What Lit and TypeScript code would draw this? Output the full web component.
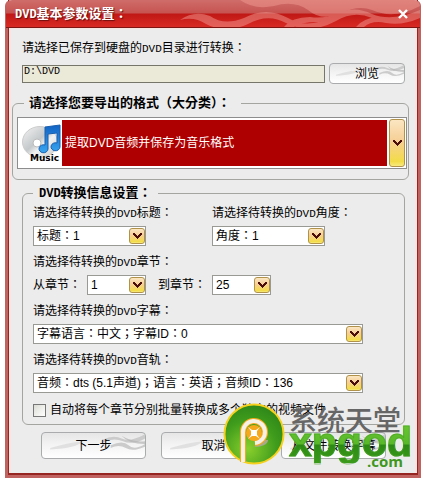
import { LitElement, html, svg, css } from "lit";
import { customElement } from "lit/decorators.js";

const chevron = svg`<path d="M1 1h2v1h1v1h1v1h1v-1h1v-1h1v-1h2v2h-1v1h-1v1h-1v1h-1v1h-1v-1h-1v-1h-1v-1h-1v-1h-1z" fill="#4a0d0a"/>`;
const smoke = html`<svg class="smoke" viewBox="0 0 75 20" preserveAspectRatio="xMaxYMin slice" aria-hidden="true">
  <path d="M44 5q8-4 14-1t17-3v3q-9 5-16 2t-15 1zM50 9q9-4 13 0t12-1v2q-9 4-14 1t-11 0z" fill="#cbcbcb"/>
  <path d="M58 2q8 5 17 4v2q-12 0-17-6z" fill="#b4b4b4" opacity=".7"/>
  <path d="M6 11q12-4 24-5q-5 5-24 6z" fill="#e0e0e0"/>
</svg>`;

@customElement("app-root")
export class AppRoot extends LitElement {
  static styles = css`
    :host {
      display: block;
      background: #fff;
      padding: 0 4px 2px 5px;
      font: 12px/16px "Liberation Sans", "Noto Sans CJK TC", sans-serif;
      color: #000;
    }
    * { box-sizing: border-box; }
    .window {
      position: relative;
      border: solid #c0625f;
      border-width: 0 3px 3px;
      border-radius: 6px 6px 0 0;
      background: #ececec;
    }
    .inner { border: solid #962420; border-width: 0 1px 2px; }
    .title {
      position: relative;
      display: flex;
      align-items: center;
      justify-content: space-between;
      height: 28px;
      margin: 0 -3px;
      padding: 0 9px 0 9px;
      border-radius: 6px 6px 0 0;
      border-bottom: 1px solid #7e1512;
      background: linear-gradient(#cf6d6a 0, #c65350 13px, #c01815 14px, #d92a24 27px);
      overflow: hidden;
    }
    .flames { position: absolute; right: 0; top: 0; width: 240px; height: 27px; }
    h1 { position: relative; margin: 0; font-size: 13px; line-height: 16px; color: #fff; text-shadow: 1px 1px 1px #6c100e; }
    .half { font-family: "Liberation Mono", monospace; font-size: 11px; line-height: 0; }
    h1 .half, legend .half { font-size: 12px; }
    .close { position: relative; width: 16px; height: 16px; padding: 2px; border: 0; background: none; }
    .close svg { display: block; }
    .body { border: solid #f8e4e0; border-width: 1px 2px 0; padding: 11px 6px 14px 1px; }
    .path { padding: 0 4px 0 10px; }
    .path label { display: block; margin-bottom: 7px; }
    .row { display: flex; align-items: center; }
    .path input {
      flex: 1;
      min-width: 0;
      height: 18px;
      margin-right: 4px;
      padding: 0 0 4px 1px;
      border: 1px solid #77766a;
      background: #ebe9d8;
      font: 10px/12px "Liberation Mono", monospace;
    }
    button { font: inherit; color: inherit; }
    .btn {
      position: relative;
      width: 105px;
      height: 27px;
      padding: 0;
      border: 1px solid #a9abad;
      border-radius: 4px;
      background: linear-gradient(#e6e6e6, #f3f3f3 45%, #fff);
      overflow: hidden;
    }
    .btn.small { width: 76px; height: 21px; }
    .btn span { position: relative; }
    .smoke { position: absolute; inset: 0; width: 100%; height: 100%; }
    fieldset { min-width: 0; margin: 0; border: 1px solid #a4a4a0; border-radius: 6px; }
    legend { padding: 0 6px 0 5px; font-size: 13px; line-height: 16px; font-weight: bold; }
    .format { margin: 11px 0 0 0; padding: 6px 1px 10px 4px; }
    .format legend { margin-left: 7px; padding-right: 10px; }
    .big { position: relative; display: flex; height: 52px; padding: 2px 19px 2px 4px; border: 1px solid #8d8d8d; background: #fff; }
    .disc { flex: none; width: 40px; height: 46px; }
    .disc text { font: bold 9px "DejaVu Sans", sans-serif; }
    select {
      appearance: none;
      display: block;
      margin: 0;
      padding: 0 20px 0 3px;
      border: 1px solid #9a9a94;
      border-radius: 0;
      width: 100%;
      height: 20px;
      background: #fff;
      color: #000;
      font: inherit;
    }
    .big select { flex: 1; min-width: 0; height: 46px; border: 0; background: #ae0000; color: #fff; }
    .combo { position: relative; display: block; }
    .arrow {
      position: absolute;
      right: 1px;
      top: 2px;
      bottom: 2px;
      width: 16px;
      display: grid;
      place-items: center;
      border: 1px solid #b0924a;
      border-radius: 3px;
      background: linear-gradient(#fbe6c2, #f6cf96 45%, #f3dc48 90%, #f8ea80);
      pointer-events: none;
    }
    .big .arrow { top: 1px; bottom: 1px; }
    .info { margin: 5px 4px 0 10px; padding: 0 10px 6px; }
    .info legend { padding-left: 6px; }
    .pair { display: grid; grid-template-columns: 113px 113px; column-gap: 66px; }
    .name { display: block; white-space: nowrap; margin: 8px 0 5px; }
    .first { margin-top: 4px; }
    .chapters { display: flex; align-items: center; }
    .chapters label { width: 54px; white-space: nowrap; }
    .chapters .combo { width: 59px; }
    .chapters .combo + label { margin-left: 12px; }
    .wide { width: 330px; max-width: 100%; }
    .check { display: flex; align-items: center; margin-top: 9px; white-space: nowrap; }
    .check input { appearance: none; flex: none; width: 13px; height: 13px; margin: 0 4px 0 0; border: 1px solid #777; background: linear-gradient(135deg, #dcdcd6, #fff); }
    .actions { display: flex; gap: 15px; margin: 7px 0 0 29px; }
    .mark { position: absolute; right: 3px; bottom: 6px; display: flex; pointer-events: none; }
    .mark .coin { width: 62px; height: 62px; }
    .words { position: relative; width: 126px; height: 66px; margin-left: 4px; }
    .cn { font: 500 28px/32px "Noto Sans CJK SC", sans-serif; color: #666; white-space: nowrap; }
    .latin {
      font: bold 41px/42px "Liberation Sans", sans-serif;
      margin-top: -14px;
      color: transparent;
      -webkit-text-stroke: 1px #3d9d1c88;
      background: linear-gradient(#6cc832 0, #58b829 23px, #2c8a14 24px, #3b9a1a 42px);
      background-clip: text;
      -webkit-background-clip: text;
    }
    .com { position: absolute; right: 12px; bottom: 0; font: bold 15px/16px "Open Sans", sans-serif; color: #3f981d; }
  `;

  arrow() {
    return html`<span class="arrow"><svg width="11" height="8" viewBox="0 0 11 8">${chevron}</svg></span>`;
  }

  combo(id: string, value: string) {
    return html`<span class="combo"><select id=${id}><option>${value}</option></select>${this.arrow()}</span>`;
  }

  label(id: string, noun: string, cls = "") {
    return html`<label class="name ${cls}" for=${id}>请选择待转换的<span class="half">DVD</span>${noun}：</label>`;
  }

  render() {
    return html`
      <main class="window">
        <div class="inner">
          <header class="title">
            <svg class="flames" viewBox="0 0 240 27" preserveAspectRatio="none" aria-hidden="true">
              <g fill="#f29a92" opacity=".5">
                <path d="M0 20q14-10 30-4q14 10 34 2q22-12 44 0q20 12 44-2q20-12 40-2q20 8 48-4v5q-26 10-48 3q-18-8-36 3q-26 14-50 2q-18-10-38 1q-22 10-42 0q-12-8-26-4z"/>
                <path d="M60 0q14 10 34 6q20-6 34 4q14 12 34 3q16-8 30-3q22 10 48-4v-6z"/>
                <path d="M104 27q8-10 26-10q16 2 26-4q-2 8-18 9q-18 0-24 5zM176 27q10-12 28-9q16 3 36-5v5q-18 8-34 5q-14-3-22 4z"/>
                <path d="M134 0q18 9 42 7t64-3v-4z"/>
              </g>
            </svg>
            <h1><span class="half">DVD</span>基本参数设置：</h1>
            <button class="close" aria-label="关闭">
              <svg width="12" height="12" viewBox="0 0 12 12"><path d="M2 2l8 8M10 2l-8 8" stroke="#fff" stroke-width="2.4"/></svg>
            </button>
          </header>
          <div class="body">
            <section class="path">
              <label for="dir">请选择已保存到硬盘的<span class="half">DVD</span>目录进行转换：</label>
              <div class="row">
                <input id="dir" type="text" value="D:\\DVD" />
                <button class="btn small">${smoke}<span>浏览</span></button>
              </div>
            </section>
            <fieldset class="format">
              <legend>请选择您要导出的格式（大分类）：</legend>
              <div class="big">
                <svg class="disc" viewBox="0 0 40 46" aria-hidden="true">
                  <defs>
                    <linearGradient id="cd" x2="1" y2="1"><stop stop-color="#f4f4f4"/><stop offset=".45" stop-color="#c4c8ca"/><stop offset=".6" stop-color="#f2f2f2"/><stop offset="1" stop-color="#c9c9c9"/></linearGradient>
                    <linearGradient id="note" x2="0" y2="1"><stop stop-color="#1263c4"/><stop offset="1" stop-color="#38a4f0"/></linearGradient>
                  </defs>
                  <ellipse cx="18" cy="22" rx="17.500" ry="15.500" fill="url(#cd)" stroke="#ccc"/>
                  <circle cx="15" cy="23" r="4" fill="#fff" stroke="#bbb"/>
                  <path d="M23 7l15-2v22a4.500 4 0 1 1-3-4V13l-9 1v15a4.500 4 0 1 1-3-4z" fill="url(#note)" stroke="#1a5fae"/>
                  <text x="8" y="41">Music</text>
                </svg>
                <select aria-label="导出格式"><option>提取DVD音频并保存为音乐格式</option></select>
                ${this.arrow()}
              </div>
            </fieldset>
            <fieldset class="info">
              <legend><span class="half">DVD</span>转换信息设置：</legend>
              <div class="pair">
                <div>${this.label("t", "标题", "first")}${this.combo("t", "标题：1")}</div>
                <div>${this.label("a", "角度", "first")}${this.combo("a", "角度：1")}</div>
              </div>
              ${this.label("from", "章节")}
              <div class="chapters">
                <label for="from">从章节：</label>${this.combo("from", "1")}
                <label for="to">到章节：</label>${this.combo("to", "25")}
              </div>
              ${this.label("sub", "字幕")}
              <div class="wide">${this.combo("sub", "字幕语言：中文；字幕ID：0")}</div>
              ${this.label("aud", "音轨")}
              <div class="wide">${this.combo("aud", "音频：dts (5.1声道)；语言：英语；音频ID：136")}</div>
              <label class="check"><input type="checkbox" />自动将每个章节分别批量转换成多个独立的视频文件</label>
            </fieldset>
            <div class="actions">
              <button class="btn">${smoke}<span>下一步</span></button>
              <button class="btn">${smoke}<span>取消</span></button>
              <button class="btn">${smoke}<span>从文件转换字幕</span></button>
            </div>
          </div>
        </div>
        <div class="mark">
          <svg class="coin" viewBox="0 0 62 62" aria-hidden="true">
            <defs><radialGradient id="orb" cx=".4" cy=".75" r=".8"><stop stop-color="#8bd02c"/><stop offset=".6" stop-color="#3f9c1c"/><stop offset="1" stop-color="#2c8419"/></radialGradient></defs>
            <circle cx="31" cy="31" r="29.500" fill="url(#orb)" stroke="#f5d01d" stroke-width="2"/>
            <path d="M32 42a12 5 0 0 0 11-5" fill="none" stroke="#a9a78a" stroke-width="4"/>
            <path d="M20 59V30a11 11 0 1 1 12 10" fill="none" stroke="#f5a91d" stroke-width="6"/>
            <path d="M20 59V30a11 11 0 1 1 12 10" fill="none" stroke="#f6f1e6" stroke-width="4"/>
            <circle cx="31" cy="30" r="8" fill="#f6a81c"/>
            <path d="M25 24l4 3h4l4-3-3 4v4l3 4-4-3h-4l-4 3 3-4v-4z" fill="#fff"/>
          </svg>
          <div class="words">
            <div class="cn">系统天堂</div>
            <div class="latin">xpgod</div>
            <div class="com">.com</div>
          </div>
        </div>
      </main>
    `;
  }
}
